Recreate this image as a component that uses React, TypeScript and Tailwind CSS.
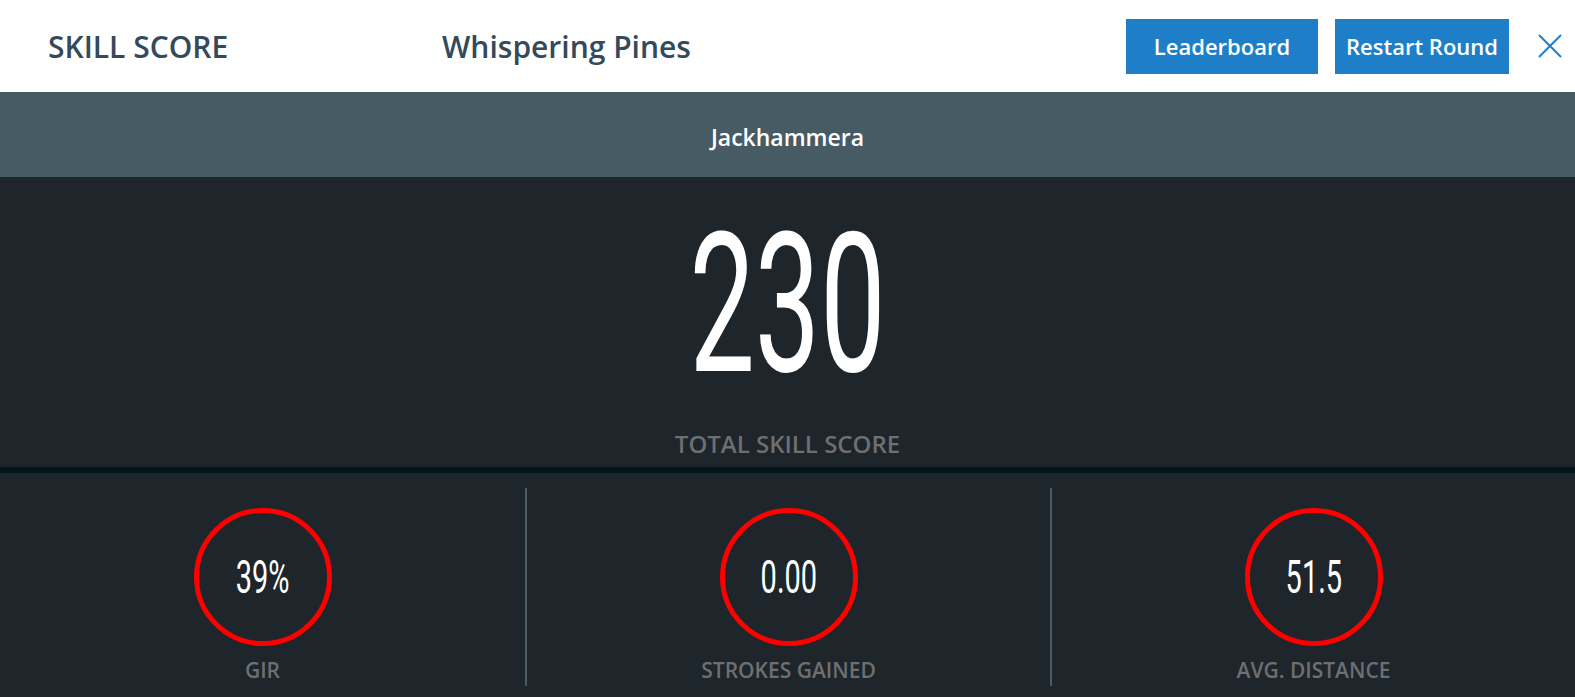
const stats = [
  { id: "gir", value: "39%", label: "GIR" },
  { id: "sg", value: "0.00", label: "STROKES GAINED" },
  { id: "dist", value: "51.5", label: "AVG. DISTANCE" },
];

const sans = { fontFamily: '"Open Sans", "Noto Sans", sans-serif' };
const narrow = { fontFamily: 'Roboto, "Liberation Sans", sans-serif' };

const App = () => {
  return (
    <div className="w-full h-[697px] bg-[#1e252b] flex flex-col overflow-hidden" style={sans}>
      {/* top header */}
      <header className="h-[92px] bg-white flex items-center pl-12 pr-[13px] shrink-0">
        <h1 className="text-[30px] font-semibold text-[#34495a] w-[394px]">SKILL SCORE</h1>
        <h2 className="text-[30px] font-semibold text-[#34495a]">Whispering Pines</h2>
        <div className="ml-auto flex items-center">
          <button className="w-[192px] h-[55px] bg-[#1e7fc8] text-white text-[22px] font-semibold">
            Leaderboard
          </button>
          <button className="w-[174px] h-[55px] ml-[17px] bg-[#1e7fc8] text-white text-[22px] font-semibold">
            Restart Round
          </button>
          <button className="ml-[29px] w-6 h-6 text-[#1e7fc8]" aria-label="close">
            <svg viewBox="0 0 24 24" className="w-6 h-6" fill="none" stroke="currentColor" strokeWidth="2">
              <path d="M1 1 L23 23 M23 1 L1 23" />
            </svg>
          </button>
        </div>
      </header>

      {/* player bar */}
      <div className="h-[85px] bg-[#465b64] flex items-center justify-center pt-[6px] shrink-0">
        <span className="text-white text-[23px] font-semibold">Jackhammera</span>
      </div>

      {/* total score */}
      <div className="h-[290px] flex flex-col items-center shrink-0">
        <div className="mt-[31px] h-[194px] flex justify-center">
          <span
            className="inline-block text-white text-[194px] leading-none font-normal scale-x-[0.6]"
            style={narrow}
          >
            230
          </span>
        </div>
        <span className="mt-[30px] text-[24px] leading-6 font-semibold text-[#6d6f71]">TOTAL SKILL SCORE</span>
      </div>

      <div className="h-[6px] bg-[#02161a] shrink-0" />

      {/* stat circles */}
      <div className="grid grid-cols-3 pt-[15px]">
        {stats.map((s, i) => (
          <div
            key={s.id}
            className={`h-[198px] flex flex-col items-center pt-5 ${i > 0 ? "border-l-2 border-[#4a5c63]" : ""}`}
          >
            <div className="w-[138px] h-[138px] rounded-full border-[5px] border-[#ff0000] flex items-center justify-center">
              <span className="inline-block text-white text-[46px] leading-none scale-x-[0.63]" style={narrow}>
                {s.value}
              </span>
            </div>
            <span className="mt-[12px] text-[21px] leading-6 font-semibold text-[#6d6f71]">{s.label}</span>
          </div>
        ))}
      </div>
    </div>
  );
};

export default App;
